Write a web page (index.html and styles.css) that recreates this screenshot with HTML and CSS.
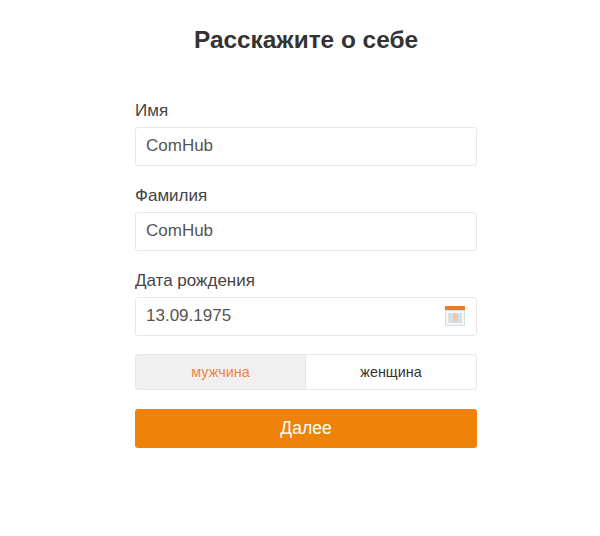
FILE: index.html
```html
<!DOCTYPE html>
<html lang="ru">
<head>
  <meta charset="UTF-8" />
  <title>Расскажите о себе</title>
  <link rel="stylesheet" href="styles.css">
</head>
<body>

  <form class="form">
    <h1 class="title">Расскажите о себе</h1>

    <div class="field">
      <div class="label">Имя</div>
      <div class="input">ComHub</div>
    </div>

    <div class="field">
      <div class="label">Фамилия</div>
      <div class="input">ComHub</div>
    </div>

    <div class="field">
      <div class="label">Дата рождения</div>
      <div class="input input-date">
        13.09.1975
        <svg class="calendar" width="20" height="20" viewBox="0 0 20 20">
          <rect x="0" y="0" width="20" height="20" fill="#cfdde5"/>
          <rect x="0" y="0" width="20" height="4" fill="#ee7a28"/>
          <rect x="1" y="5" width="18" height="14" fill="#f4f7f9"/>
          <rect x="3" y="7" width="14" height="10" fill="#d5e0e6"/>
          <rect x="8" y="8" width="5" height="7" fill="#f3c4a6"/>
        </svg>
      </div>
    </div>

    <div class="gender">
      <div class="gender-item gender-active">мужчина</div>
      <div class="gender-item">женщина</div>
    </div>

    <button class="next" type="button">Далее</button>
  </form>

</body>
</html>
```

FILE: styles.css
```css
body {
  font-family: "Liberation Sans", Arial, sans-serif;
  background: #fff;
  color: #333;
  margin: 0;
}

.form {
  width: 342px;
  margin-left: 135px;
  padding-top: 26px;
}

.title {
  margin: 0 0 48px;
  font-size: 24.4px;
  line-height: 28px;
  font-weight: bold;
  text-align: center;
}

.field {
  margin-bottom: 21px;
}

.label {
  font-size: 17px;
  line-height: 17px;
  margin-bottom: 8px;
  color: #444;
}

.input {
  display: flex;
  align-items: center;
  justify-content: space-between;
  box-sizing: border-box;
  height: 39px;
  padding: 0 11px 2px 10px;
  background: #fff;
  border: 1px solid #e8e8e8;
  border-radius: 3px;
  font-size: 17px;
  color: #555;
}

.gender {
  display: flex;
  box-sizing: border-box;
  height: 36px;
  margin-top: -3px;
  border: 1px solid #e8e8e8;
  border-radius: 3px;
  overflow: hidden;
}

.gender-item {
  flex: 1;
  display: flex;
  align-items: center;
  justify-content: center;
  font-size: 14.4px;
}

.gender-active {
  flex: none;
  width: 170px;
  box-sizing: border-box;
  background: #f0f0f0;
  border-right: 1px solid #e4e4e4;
  color: #f0843c;
}

.next {
  display: block;
  width: 100%;
  height: 39px;
  margin-top: 19px;
  padding: 0;
  background: #ef8208;
  border: none;
  border-radius: 3px;
  color: #fff;
  font-family: inherit;
  font-size: 17.5px;
}
```
